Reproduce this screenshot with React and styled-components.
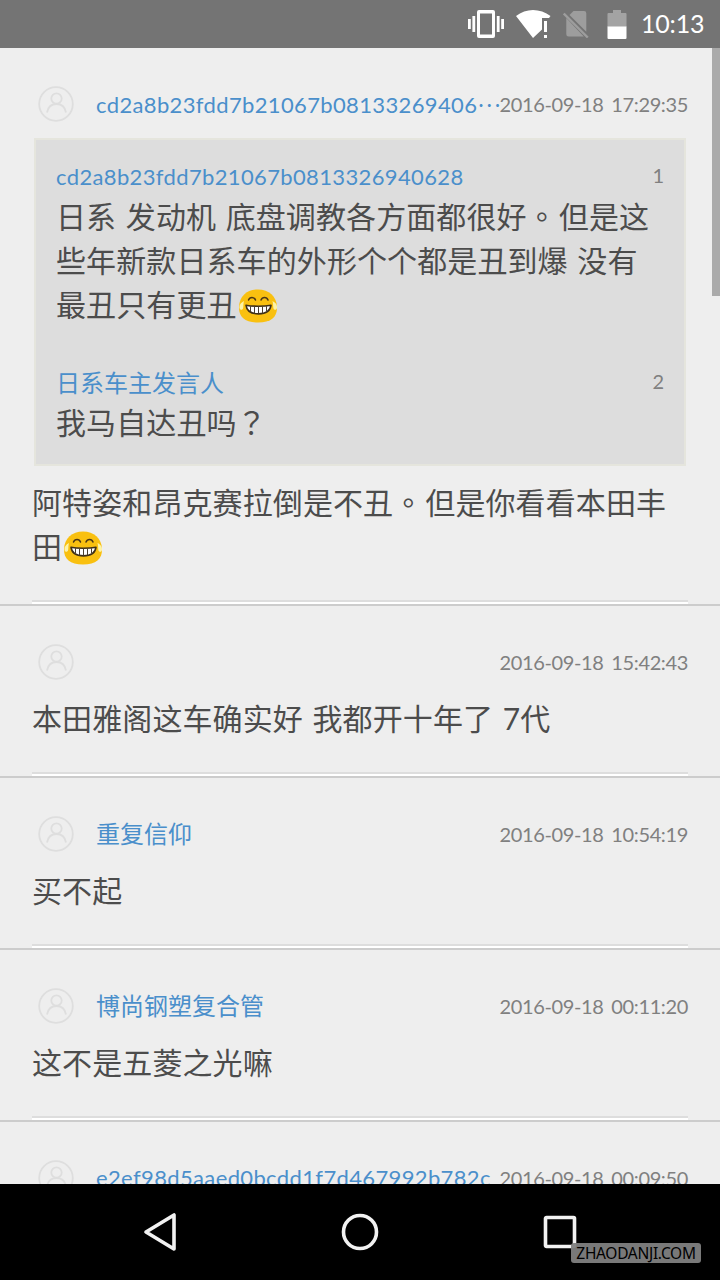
import styled, { createGlobalStyle } from 'styled-components';

const comments = [
    {
        name: 'cd2a8b23fdd7b21067b08133269406',
        cut: true,
        time: '2016-09-18 17:29:35',
        quotes: [
            {
                name: 'cd2a8b23fdd7b21067b0813326940628',
                lines: ['日系 发动机 底盘调教各方面都很好。但是这', '些年新款日系车的外形个个都是丑到爆 没有', '最丑只有更丑😂'],
            },
            { name: '日系车主发言人', lines: ['我马自达丑吗？'] },
        ],
        lines: ['阿特姿和昂克赛拉倒是不丑。但是你看看本田丰', '田😂'],
    },
    { name: '', time: '2016-09-18 15:42:43', lines: ['本田雅阁这车确实好 我都开十年了 7代'] },
    { name: '重复信仰', time: '2016-09-18 10:54:19', lines: ['买不起'] },
    { name: '博尚钢塑复合管', time: '2016-09-18 00:11:20', lines: ['这不是五菱之光嘛'] },
    { name: 'e2ef98d5aaed0bcdd1f7d467992b782c', time: '2016-09-18 00:09:50', lines: [''] },
];

const isLatin = (text) => /^[\x00-\x7f]*$/.test(text);

const App = () => {
    return (
        <Phone>
            <GlobalStyle />
            <StatusBar />
            <Feed>
                {comments.map((comment) => (
                    <Comment key={comment.time} {...comment} />
                ))}
                <Scrollbar />
            </Feed>
            <NavBar />
        </Phone>
    );
};

const Comment = ({ name, cut, time, quotes, lines }) => {
    return (
        <StyledComment>
            <Header>
                <Avatar />
                <Name $latin={isLatin(name)} $grow>
                    {name}
                    {cut && <Dots>…</Dots>}
                </Name>
                <Time>{time}</Time>
            </Header>
            {quotes && (
                <QuoteBox>
                    {quotes.map((quote, i) => (
                        <Quote key={quote.name}>
                            <QuoteTop>
                                <Name $latin={isLatin(quote.name)}>{quote.name}</Name>
                                <Floor>{i + 1}</Floor>
                            </QuoteTop>
                            <Lines lines={quote.lines} />
                        </Quote>
                    ))}
                </QuoteBox>
            )}
            <Body $afterQuote={Boolean(quotes)}>
                <Lines lines={lines} />
            </Body>
        </StyledComment>
    );
};

const Lines = ({ lines }) =>
    lines.map((line) => (
        <Line key={line}>
            {line.split(/([。？]|😂)/u).map((part, i) => {
                if (part === '😂') return <JoyFace key={i} />;
                if (part === '。' || part === '？') return <Punct key={i}>{part}</Punct>;
                return part;
            })}
        </Line>
    ));

const Avatar = () => (
    <AvatarIcon viewBox="0 0 36 36" fill="none" stroke="#dedede" strokeWidth="1.8">
        <circle cx="18" cy="18" r="16.8" />
        <circle cx="18.5" cy="12.5" r="5.2" />
        <path d="M9 26.5c1-5.5 4.500-8.500 9.500-8.500s8.500 3 9.500 8.500" />
    </AvatarIcon>
);

const JoyFace = () => (
    <Emoji viewBox="0 0 40 34" role="img" aria-label="joy">
        <path d="M20 .5C31 .5 38.500 7 39 18c.3 10-6 15.500-19 15.500S.7 28 1 18C1.500 7 9 .5 20 .5z" fill="#f9c010" />
        <path d="M10.500 11c1.300-3.500 5.800-3.500 7 0M23 11c1.300-3.500 5.800-3.500 7 0" fill="none" stroke="#4a3617" strokeWidth="1.500" strokeLinecap="round" />
        <path d="M8 16.200c6 1.300 18 1.300 25 0-.6 5.500-5 8.700-12.500 8.700S8.600 21.700 8 16.200z" fill="#fff" stroke="#3f3018" strokeWidth="1.600" strokeLinejoin="round" />
        <path d="M12.500 17.200v5M16.500 17.500v6.800M20.500 17.500v7M24.500 17.500v6.800M28.500 17.200v5" stroke="#4b4030" strokeWidth="1" />
        <path d="M6 12c-3 1.500-5 4-4.500 7 .5 2.500 3.300 2.300 3.700-.3.300-2.200 0-4 .8-6.700zM34.500 12c3 1.500 5 4 4.500 7-.5 2.500-3.300 2.300-3.700-.3-.3-2.200 0-4-.8-6.700z" fill="#fdf3a8" />
    </Emoji>
);

const StatusBar = () => (
    <StyledStatus>
        <svg width="36" height="28" viewBox="0 0 36 28" fill="#fff">
            <path d="M11 0h14a2 2 0 0 1 2 2v24a2 2 0 0 1-2 2H11a2 2 0 0 1-2-2V2a2 2 0 0 1 2-2zm1 3.500v21h12v-21zM0 9h2.800v10H0zM4.400 6h2.800v16H4.400zM28.800 6h2.800v16h-2.800zM33.200 9H36v10h-2.800z" fillRule="evenodd" />
        </svg>
        <svg width="35" height="29" viewBox="0 0 35 29" fill="#fff">
            <path d="M0 6C5 2 11 0 17 0s12.500 2 17.500 6L33 8h-7v11.500L17 28z" />
            <path d="M28 11h3v11h-3zM28 25h3v3h-3z" />
        </svg>
        <svg width="27" height="27" viewBox="0 0 27 27">
            <path d="M10.500 0H21a2.300 2.300 0 0 1 2.300 2.300v18.500L6.500 4zM3.300 7l17.500 18.500H5.600a2.300 2.300 0 0 1-2.300-2.300z" fill="#9d9d9d" />
            <path d="M.8 2.500l24 24" stroke="#9d9d9d" strokeWidth="2.400" />
        </svg>
        <svg width="20" height="29" viewBox="0 0 20 29">
            <path d="M6 0h8v3h4.500q1 0 1 1v13H.5V4q0-1 1-1H6z" fill="#a3a3a3" />
            <path d="M.5 16.500h19V28q0 1-1 1h-17q-1 0-1-1z" fill="#fff" />
        </svg>
        <Clock>10:13</Clock>
    </StyledStatus>
);

const NavBar = () => (
    <StyledNav>
        <svg width="40" height="40" viewBox="0 0 40 40">
            <path d="M34 3v34L6 20z" />
        </svg>
        <svg width="40" height="40" viewBox="0 0 40 40">
            <circle cx="20" cy="20" r="16.500" />
        </svg>
        <svg width="40" height="40" viewBox="0 0 40 40">
            <rect x="5.500" y="5.500" width="29" height="29" rx="1" />
        </svg>
        <Watermark>ZHAODANJI.COM</Watermark>
    </StyledNav>
);

//Styled Components
const GlobalStyle = createGlobalStyle`
* {
    box-sizing: border-box;
}
body {
    margin: 0;
    font-family: Lato, "Noto Sans CJK SC", sans-serif;
}
`

const Phone = styled.div`
width: 720px;
height: 1280px;
display: flex;
flex-direction: column;
overflow: hidden;
background: #eee;
`

const StyledStatus = styled.div`
height: 48px;
flex: none;
display: flex;
align-items: center;
justify-content: flex-end;
padding-right: 16px;
background: #747474;
svg {
    margin-right: 12px;
}
svg:nth-of-type(3) {
    margin-right: 17px;
}
svg:nth-of-type(4) {
    margin-right: 14px;
}
`

const Clock = styled.span`
width: 63px;
font-size: 25px;
line-height: 46px;
height: 48px;
letter-spacing: -0.2px;
white-space: nowrap;
color: white;
`

const Feed = styled.div`
flex: 1;
min-height: 0;
position: relative;
overflow: hidden;
`

const Scrollbar = styled.div`
position: absolute;
top: 0;
right: 0;
width: 8px;
height: 248px;
background: #aaa;
`

const StyledComment = styled.div`
padding: 38px 32px 0;
border-bottom: 2px solid #ccc;
`

const Header = styled.div`
height: 36px;
display: flex;
align-items: center;
padding-left: 6px;
`

const AvatarIcon = styled.svg`
width: 36px;
height: 36px;
flex: none;
margin-right: 22px;
`

const Name = styled.span`
flex: ${(props) => (props.$grow ? '1' : 'none')};
min-width: 0;
white-space: nowrap;
font-size: ${(props) => (props.$latin ? '22px' : '24px')};
letter-spacing: ${(props) => (props.$latin ? '0.36px' : '0')};
line-height: 36px;
color: #4a8fcb;
`

const Dots = styled.span`
font-family: "Noto Sans CJK TC", sans-serif;
line-height: 1;
vertical-align: 6px;
`

const Time = styled.span`
flex: none;
font-size: 20px;
line-height: 36px;
letter-spacing: -0.36px;
word-spacing: 3px;
color: #808080;
`

const QuoteBox = styled.div`
margin: 16px 2px 0;
height: 328px;
padding: 20px 20px 0;
border: 2px solid #e5e5dd;
background: #ddd;
`

const Quote = styled.div`
margin-bottom: 40px;
`

const QuoteTop = styled.div`
height: 34px;
display: flex;
justify-content: space-between;
align-items: center;
`

const Floor = styled.span`
font-size: 20px;
line-height: 30px;
align-self: flex-start;
color: #808080;
`

const Body = styled.div`
padding: ${(props) => (props.$afterQuote ? '14px 0 32px' : '16px 0 32px')};
border-bottom: 2px solid #ddd;
box-shadow: 0 2px 0 #fff;
margin-bottom: 2px;
`

const Line = styled.p`
margin: 0;
height: 44px;
font-size: 30px;
line-height: 44px;
letter-spacing: 0.1px;
word-spacing: 1.8px;
white-space: nowrap;
color: #4c4c4c;
`

const Punct = styled.span`
font-family: "Noto Sans CJK TC", sans-serif;
line-height: 1;
margin-right: 2px;
`

const Emoji = styled.svg`
width: 40px;
height: 34px;
margin-left: 1px;
vertical-align: -7px;
`

const StyledNav = styled.div`
height: 96px;
flex: none;
position: relative;
display: flex;
align-items: center;
justify-content: center;
gap: 160px;
background: black;
svg {
    fill: none;
    stroke: #f2f2f2;
    stroke-width: 3.6;
    stroke-linejoin: round;
}
`

const Watermark = styled.span`
position: absolute;
right: 19px;
bottom: 17px;
width: 130px;
height: 20px;
border-radius: 3px;
background: rgba(128, 128, 128, 0.95);
color: black;
font: 15.5px/20px "Noto Sans", sans-serif;
letter-spacing: -0.3px;
text-align: center;
white-space: nowrap;
`

export default App;
